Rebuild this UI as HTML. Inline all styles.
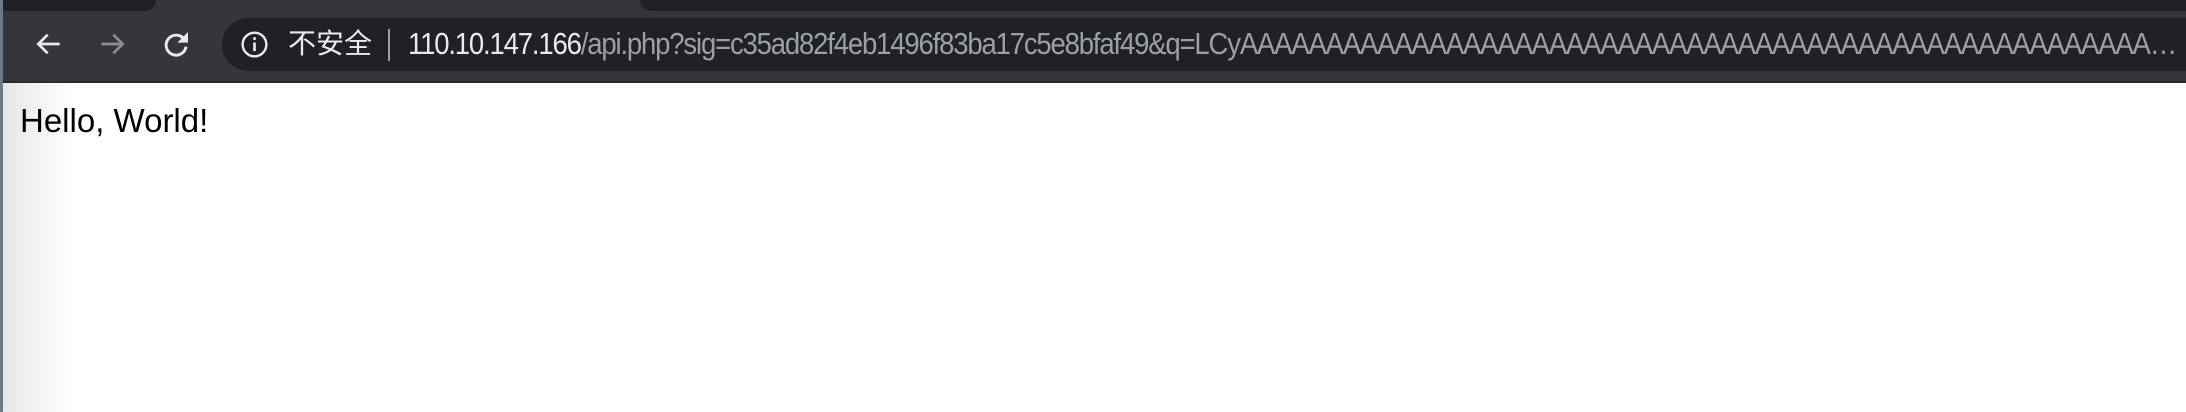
<!DOCTYPE html>
<html><head><meta charset="utf-8"><style>
html,body{margin:0;padding:0;width:2186px;height:412px;overflow:hidden;background:#fff;position:relative;font-family:"Liberation Sans","Noto Sans CJK SC",sans-serif}
.tabs{position:absolute;left:0;top:0;width:2186px;height:12px;background:#35363a}
.tab1{position:absolute;left:0;top:0;width:156px;height:11px;background:#202124;border-radius:0 0 12px 0}
.tab2{position:absolute;left:640px;top:0;width:1546px;height:11px;background:#202124;border-radius:0 0 0 12px}
.bar{position:absolute;left:0;top:12px;width:2186px;height:69px;background:#35363a}
.line{position:absolute;left:0;top:81px;width:2186px;height:2px;background:#2a2b2e}
.omni{position:absolute;left:222px;top:18px;width:2100px;height:53px;background:#202124;border-radius:27px}
.ic{position:absolute}
.cn{position:absolute;left:288px;top:25px;font-size:28px;color:#e8eaed;line-height:38px}
.div{position:absolute;left:388px;top:29px;width:2px;height:32px;background:#9aa0a6}
.url{position:absolute;left:408px;top:22px;width:2006px;font-size:31px;line-height:44px;color:#9aa0a6;white-space:nowrap;overflow:hidden;text-overflow:ellipsis;letter-spacing:-1.3px;transform:scaleX(0.886);transform-origin:0 0}
.url b{font-weight:normal;color:#e8eaed}
.hello{position:absolute;left:20px;top:102px;font-size:33px;color:#000;line-height:38px}
.shade{position:absolute;left:0;top:83px;width:75px;height:329px;background:linear-gradient(to right,#e6e6e6,#fff)}
.edge{position:absolute;left:0;top:0;width:3px;height:412px;background:#6b7a8a}
</style></head><body>
<div class="tabs"><div class="tab1"></div><div class="tab2"></div></div>
<div class="bar"></div>
<div class="line"></div>
<div class="shade"></div>
<div class="edge"></div>
<div class="omni"></div>
<svg class="ic" style="left:33px;top:28px" width="32" height="32" viewBox="0 0 24 24"><path d="M20 12H5M11 5l-7 7 7 7" fill="none" stroke="#e8eaed" stroke-width="2"/></svg>
<svg class="ic" style="left:96px;top:28px" width="32" height="32" viewBox="0 0 24 24"><path d="M4 12h15M13 5l7 7-7 7" fill="none" stroke="#8a8d91" stroke-width="2"/></svg>
<svg class="ic" style="left:160px;top:28px" width="32" height="32" viewBox="0 0 24 24"><path d="M18.5 9A7.5 7.5 0 1 0 19.5 14" fill="none" stroke="#e8eaed" stroke-width="2.2"/><path d="M21 3v8h-8z" fill="#e8eaed"/></svg>
<svg class="ic" style="left:240px;top:30px" width="29" height="29" viewBox="0 0 22 22"><circle cx="11" cy="11" r="9" fill="none" stroke="#e8eaed" stroke-width="1.8"/><rect x="10" y="9.5" width="2" height="6.5" fill="#e8eaed"/><rect x="10" y="5.5" width="2" height="2" fill="#e8eaed"/></svg>
<div class="cn">不安全</div>
<div class="div"></div>
<div class="url"><b>110.10.147.166</b>/api.php?sig=c35ad82f4eb1496f83ba17c5e8bfaf49&amp;q=LCyAAAAAAAAAAAAAAAAAAAAAAAAAAAAAAAAAAAAAAAAAAAAAAAAAAAAAAAAAAAAAAAAAAAAAAAAAAAAAAAAAAA</div>
<div class="hello">Hello, World!</div>
</body></html>
